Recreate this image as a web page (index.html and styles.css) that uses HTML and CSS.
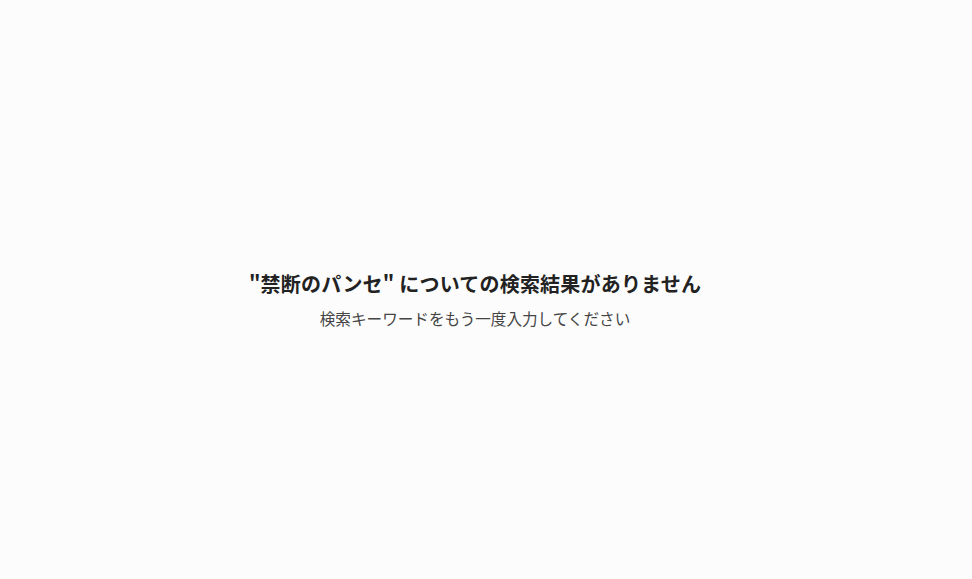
FILE: index.html
```html
<!DOCTYPE html>
<html lang="ja">
<head>
<meta charset="utf-8">
<link rel="stylesheet" href="styles.css">
</head>
<body>
<main class="empty">
  <h1 class="empty-title">"禁断のパンセ" についての検索結果がありません</h1>
  <p class="empty-text">検索キーワードをもう一度入力してください</p>
</main>
</body>
</html>
```
FILE: styles.css
```css
html, body {
  margin: 0;
  padding: 0;
  height: 100%;
  background: #fcfcfc;
}
body {
  font-family: "Noto Sans CJK JP", "Noto Sans", sans-serif;
}
.empty {
  box-sizing: border-box;
  height: 100%;
  padding: 20px 22px 0 0;
  display: flex;
  flex-direction: column;
  align-items: center;
  justify-content: center;
}
.empty-title {
  margin: 0;
  font-size: 20px;
  font-weight: 700;
  line-height: 28px;
  letter-spacing: 0.2px;
  color: #222;
}
.empty-text {
  margin: 8px 0 0;
  font-size: 15.6px;
  line-height: 24px;
  color: #444;
}
```
